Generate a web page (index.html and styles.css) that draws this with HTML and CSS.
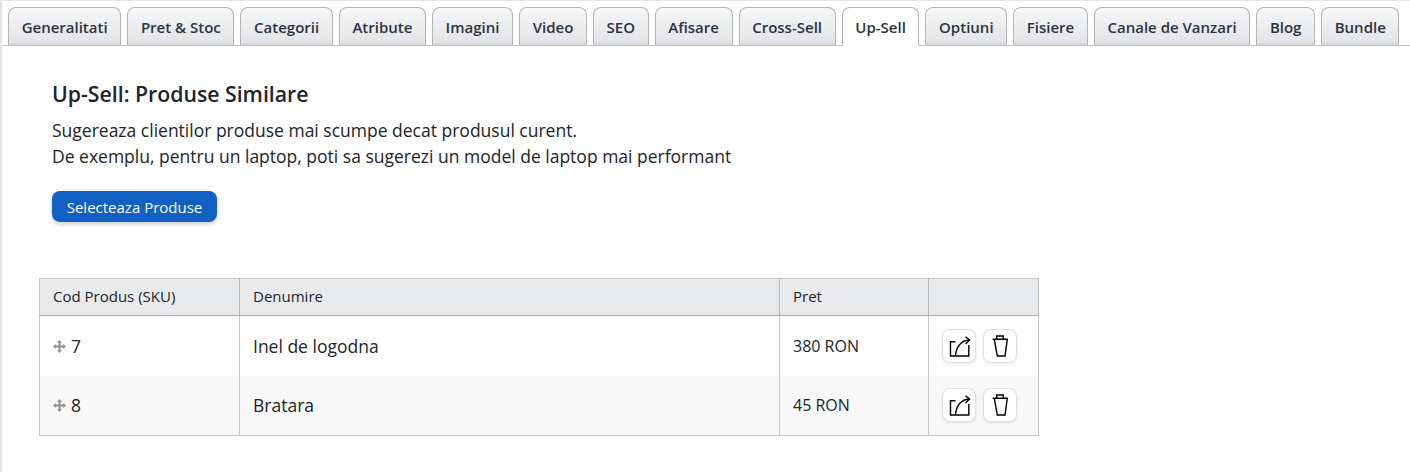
FILE: index.html
```html
<!DOCTYPE html>
<html lang="en">
<head>
    <meta charset="UTF-8">
    <title>Up-Sell</title>
    <link rel="stylesheet" href="styles.css">
</head>
<body>
    <div class="page">
        <div class="tabs">
            <a class="tab">Generalitati</a>
            <a class="tab">Pret &amp; Stoc</a>
            <a class="tab">Categorii</a>
            <a class="tab">Atribute</a>
            <a class="tab">Imagini</a>
            <a class="tab">Video</a>
            <a class="tab">SEO</a>
            <a class="tab">Afisare</a>
            <a class="tab">Cross-Sell</a>
            <a class="tab active">Up-Sell</a>
            <a class="tab">Optiuni</a>
            <a class="tab">Fisiere</a>
            <a class="tab">Canale de Vanzari</a>
            <a class="tab">Blog</a>
            <a class="tab">Bundle</a>
        </div>
        <div class="content">
            <div class="intro">
                <h2 class="title">Up-Sell: Produse Similare</h2>
                <p class="desc">Sugereaza clientilor produse mai scumpe decat produsul curent.<br>De exemplu, pentru un laptop, poti sa sugerezi un model de laptop mai performant</p>
                <button class="btn-primary">Selecteaza Produse</button>
            </div>
            <table class="products">
                <thead>
                    <tr>
                        <th class="col-sku">Cod Produs (SKU)</th>
                        <th class="col-name">Denumire</th>
                        <th class="col-price">Pret</th>
                        <th class="col-actions"></th>
                    </tr>
                </thead>
                <tbody>
                    <tr>
                        <td class="big">
                            <svg class="drag" viewBox="0 0 13 13"><path d="M6.500 0 9 2.800H7.400V5.600H10.200V4L13 6.500 10.200 9V7.400H7.400V10.200H9L6.500 13 4 10.200H5.600V7.400H2.800V9L0 6.500 2.800 4V5.600H5.600V2.800H4Z"/></svg>7
                        </td>
                        <td class="big">Inel de logodna</td>
                        <td class="price">380 RON</td>
                        <td>
                            <div class="actions">
                                <button class="icon-btn"><svg viewBox="0 0 24 24"><path d="M8.500 7.700H3.500V22H21.800V11"/><path d="M8.500 22C9 13 14 6.300 22.500 6"/><path d="M18.500 2.700 22.500 6 18.500 10"/></svg></button>
                                <button class="icon-btn"><svg viewBox="0 0 24 24"><path d="M4.700 5.300H20M6.300 5.300 9.300 22H17L19.300 5.300M8.700 5.300V2H15.300V5.300"/></svg></button>
                            </div>
                        </td>
                    </tr>
                    <tr class="alt">
                        <td class="big">
                            <svg class="drag" viewBox="0 0 13 13"><path d="M6.500 0 9 2.800H7.400V5.600H10.200V4L13 6.500 10.200 9V7.400H7.400V10.200H9L6.500 13 4 10.200H5.600V7.400H2.800V9L0 6.500 2.800 4V5.600H5.600V2.800H4Z"/></svg>8
                        </td>
                        <td class="big">Bratara</td>
                        <td class="price">45 RON</td>
                        <td>
                            <div class="actions">
                                <button class="icon-btn"><svg viewBox="0 0 24 24"><path d="M8.500 7.700H3.500V22H21.800V11"/><path d="M8.500 22C9 13 14 6.300 22.500 6"/><path d="M18.500 2.700 22.500 6 18.500 10"/></svg></button>
                                <button class="icon-btn"><svg viewBox="0 0 24 24"><path d="M4.700 5.300H20M6.300 5.300 9.300 22H17L19.300 5.300M8.700 5.300V2H15.300V5.300"/></svg></button>
                            </div>
                        </td>
                    </tr>
                </tbody>
            </table>
        </div>
    </div>
</body>
</html>
```

FILE: styles.css
```css
* {
    box-sizing: border-box;
}
body {
    margin: 0;
    height: 472px;
    overflow: hidden;
    background: #fff;
    color: #212529;
    font-family: "Open Sans", sans-serif;
}
.page {
    height: 100%;
    border-top: 1px solid #e4e4e4;
    border-left: 2px solid #e4e4e4;
}
.tabs {
    display: flex;
    gap: 6px;
    height: 45px;
    padding: 6px 0 0 6px;
    border-bottom: 1px solid #c4c4c8;
}
.tab {
    display: flex;
    align-items: center;
    height: 38px;
    padding: 0 12.63px;
    border: 1px solid #b5b5b5;
    border-bottom: 0;
    border-radius: 8px 8px 0 0;
    background: linear-gradient(#f7f7f8, #e3e4e7 92%, #cfd0d4);
    color: #2b3440;
    font-size: 15px;
    font-weight: 600;
    white-space: nowrap;
}
.tab.active {
    height: 39px;
    margin-bottom: -1px;
    background: #fff;
}
.content {
    padding: 33px 0 0 37px;
}
.intro {
    padding-left: 13px;
}
.title {
    margin: 0 0 8px;
    font-size: 21.25px;
    line-height: 30px;
    font-weight: 600;
}
.desc {
    margin: 0 0 22px;
    font-size: 17.5px;
    line-height: 26px;
}
.btn-primary {
    display: block;
    width: 165px;
    height: 31px;
    padding: 0;
    border: 0;
    border-radius: 8px;
    background: #1160c4;
    box-shadow: 0 2px 5px rgba(0, 0, 0, 0.2);
    color: #fff;
    font-family: inherit;
    font-size: 15px;
}
.products {
    width: 1000px;
    margin-top: 56px;
    border-collapse: collapse;
    border: 1px solid #c9c9cb;
    table-layout: fixed;
    font-size: 15px;
}
.products th {
    height: 37px;
    padding: 0 13px 2px;
    background: #e9eaec;
    border-right: 1px solid #b9b9bc;
    border-bottom: 1px solid #a9a9ac;
    text-align: left;
    font-weight: 400;
}
.products td {
    height: 60px;
    padding: 0 13px;
    border-right: 1px solid #c9c9cb;
}
.products td.big {
    font-size: 17.5px;
}
.products td.price {
    font-size: 16px;
}
.products .alt td {
    background: #f8f8f8;
}
.col-sku { width: 200px; }
.col-name { width: 540px; }
.col-price { width: 149px; }
.drag {
    width: 13px;
    height: 13px;
    margin-right: 5px;
    fill: #8f8f8f;
}
.actions {
    display: flex;
    gap: 7px;
}
.icon-btn {
    display: flex;
    align-items: center;
    justify-content: center;
    width: 34px;
    height: 34px;
    padding: 0;
    border: 1px solid #e0e0e0;
    border-radius: 8px;
    background: #fff;
    box-shadow: 0 1px 3px rgba(0, 0, 0, 0.1);
}
.icon-btn svg {
    width: 24px;
    height: 24px;
    fill: none;
    stroke: #000;
    stroke-width: 1.4;
}
```
